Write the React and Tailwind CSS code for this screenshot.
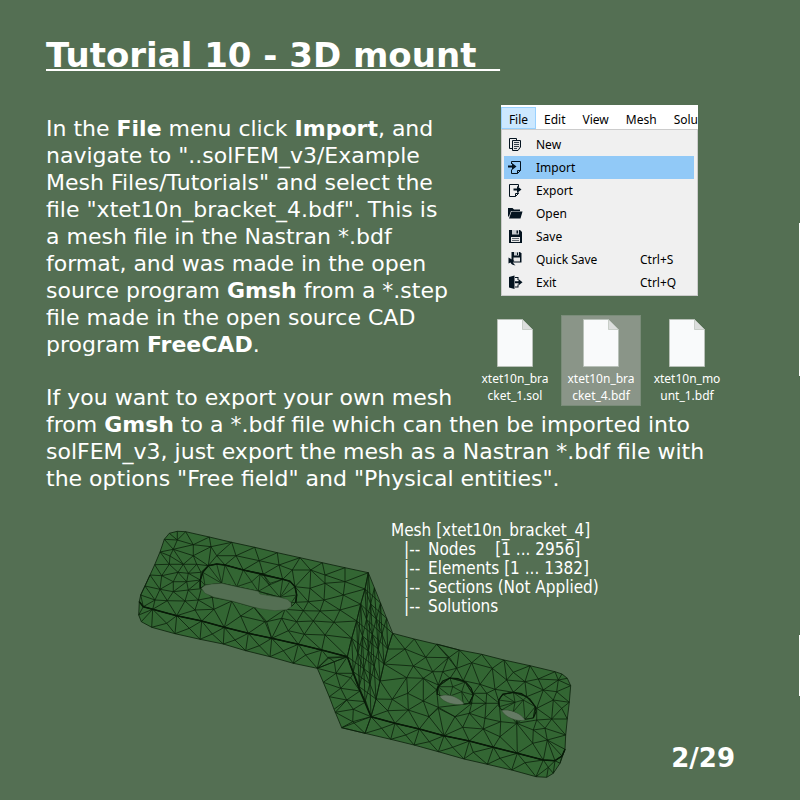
import React from "react";

/* ---------- mesh geometry ---------- */

// Points are measured on a grid three times finer than the drawing,
// relative to the corner of the patch they belong to.
const at = (ox, oy, list) => {
  const out = [];
  for (let i = 0; i < list.length; i += 2) out.push([ox + list[i] / 3, oy + list[i + 1] / 3]);
  return out;
};
const A = (...l) => at(130, 520, l);
const B = (...l) => at(260, 540, l);
const C = (...l) => at(310, 620, l);
const D = (...l) => at(430, 640, l);

const upperFold = [...A(28, 245, 40, 260, 68, 268, 140, 287, 215, 303, 283, 322, 355, 340), ...B(35, 295, 115, 313, 185, 330, 262, 350)];
const lowerFold = [...C(183, 290, 255, 310, 328, 327), ...D(42, 287, 118, 303, 190, 322, 262, 340, 340, 360, 375, 362, 396, 348, 405, 328)];
const rampTop = B(325, 98, 315, 147, 302, 193, 290, 243, 275, 295, 262, 350);
const rampBottom = [...B(398, 280, 383, 327, 372, 372, 360, 423), ...C(198, 237, 183, 290)];

const upperEdge = [
  ...A(28, 245, 32, 225, 60, 165, 74, 134, 90, 96, 103, 58, 118, 40, 142, 34, 167, 35, 238, 51, 305, 67, 374, 82),
  ...B(52, 38, 120, 53, 187, 68, 255, 83, 325, 98),
];
const lowerEdge = [
  ...C(245, 40, 313, 57, 380, 73),
  ...D(20, 12, 88, 30, 155, 43, 222, 60, 300, 77, 375, 95, 396, 102, 412, 115, 422, 137, 418, 187, 412, 237, 407, 285, 405, 328),
];
const upperBase = [...A(26, 285, 34, 305, 65, 322, 135, 341, 210, 358, 280, 372, 347, 392, 420, 410), ...B(100, 370, 172, 385)];
const lowerBase = [...C(95, 323, 165, 340, 242, 358, 312, 375, 385, 395), ...D(102, 357, 172, 373, 245, 390, 318, 410, 350, 412, 370, 400, 390, 370, 405, 328)];

const slotRim = [...A(211, 205, 211, 180, 218, 157, 235, 137, 260, 132, 285, 135, 340, 150, 400, 163), ...B(0, 103, 68, 118, 90, 124, 105, 140, 110, 165, 107, 187)];
const slotVoid = [...A(214, 205, 225, 196, 245, 192, 275, 190, 320, 200, 385, 214), ...B(0, 162, 35, 168, 60, 172, 82, 178, 94, 188, 94, 200, 80, 209, 45, 212, 0, 206), ...A(372, 262, 305, 243, 250, 231, 225, 220)];

const regions = [
  {
    outline: [...upperEdge, ...rampTop.slice(1), ...[...upperFold].reverse().slice(1)],
    inner: [
      ...A(103, 58, 142, 60, 130, 88, 190, 74, 243, 80, 120, 108, 190, 107, 260, 107, 318, 107, 388, 122, 118, 133, 160, 133, 200, 133, 235, 137, 285, 135, 340, 150, 400, 163),
      ...A(95, 167, 144, 157, 175, 160, 213, 157, 45, 198, 90, 208, 130, 185, 170, 185, 211, 180, 75, 240, 112, 242, 130, 215, 165, 243, 175, 210, 214, 206, 205, 240, 195, 270, 252, 268, 247, 232, 305, 243, 372, 262, 332, 288, 405, 305),
      ...B(57, 75, 97, 90, 152, 90, 195, 105, 255, 125, 68, 118, 105, 140, 150, 145, 195, 130, 250, 165, 192, 180, 145, 185, 107, 187, 240, 210, 180, 213, 130, 212, 75, 208, 222, 247, 160, 243, 110, 245, 65, 235, 20, 245, 195, 285, 133, 283, 85, 272),
    ],
  },
  {
    outline: [...upperFold, ...[...upperBase].reverse()],
    inner: [...A(110, 310, 178, 325, 247, 342, 315, 360, 388, 377), ...B(70, 332, 137, 345, 205, 355)],
  },
  {
    outline: [...B(262, 350), ...C(130, 160, 150, 213, 168, 245, 183, 290), ...C(165, 340, 95, 323, 76, 277, 58, 230, 40, 187), ...B(172, 385, 205, 352)],
    inner: C(73, 125, 78, 160, 122, 173, 92, 205, 110, 240, 72, 268, 128, 305, 130, 268),
  },
  {
    outline: [...lowerEdge, ...[...lowerFold].reverse().slice(1), ...[...rampBottom].reverse().slice(1)],
    inner: [
      ...C(285, 87, 347, 112, 415, 113, 290, 173, 310, 138, 368, 155, 340, 175, 385, 195, 293, 220, 340, 243, 247, 238, 233, 272, 295, 270, 357, 290, 385, 262),
      ...D(58, 52, 125, 68, 187, 85, 250, 97, 38, 95, 80, 85, 150, 133, 195, 148, 230, 120, 285, 125, 325, 117, 340, 150, 385, 120, 380, 155, 370, 180, 395, 205, 320, 205, 365, 237, 345, 265, 320, 240, 352, 300, 308, 310, 310, 270, 260, 250, 212, 245, 160, 267, 98, 262, 165, 235, 170, 160, 168, 190, 125, 190, 75, 230, 118, 220, 25, 205, 210, 290, 20, 150, 60, 115, 100, 122, 130, 160, 208, 190, 250, 157, 290, 170),
    ],
  },
  {
    outline: [...lowerFold, ...[...lowerBase].reverse().slice(1)],
    inner: [...C(215, 325, 287, 345, 358, 365), ...D(68, 322, 130, 337, 210, 355, 285, 368, 355, 382)],
  },
];

const slotWall = {
  outline: [...slotRim, ...B(94, 200, 94, 188, 60, 172), ...A(385, 214, 320, 200, 275, 190, 225, 196)],
  inner: [...A(365, 185, 420, 190), ...B(28, 135)],
};
const holeWalls = [
  { outline: D(22, 160, 24, 140, 60, 114, 105, 126, 130, 165, 118, 190, 100, 192, 60, 168, 30, 168), inner: D(68, 140, 95, 155) },
  { outline: D(208, 200, 206, 180, 218, 163, 250, 157, 290, 170, 316, 200, 310, 234, 285, 238, 250, 215, 215, 210), inner: D(255, 187, 280, 180) },
];
const holeRims = [
  D(22, 165, 22, 145, 38, 123, 60, 114, 85, 116, 108, 127, 124, 145, 130, 165, 118, 190),
  D(208, 200, 206, 180, 218, 163, 250, 157, 275, 161, 300, 178, 316, 200, 318, 215, 310, 234),
];
const holeVoids = ["M439.500 696.500C444 694 452 695 457 698C461 700 463 702 464 704C456 706 444 703 439.500 696.500Z", "M501.500 710.500C507 709 514 711 519 714C522 716 524 718 525 720C517 722 506 718 501.500 710.500Z"];

function triangulate(points) {
  const p = [...points, [-4000, -4000], [6000, -4000], [300, 8000]];
  const n = points.length;
  let tris = [[n, n + 1, n + 2]];
  const inCircle = ([a, b, c], q) => {
    const [ax, ay] = p[a], [bx, by] = p[b], [cx, cy] = p[c];
    const d = 2 * (ax * (by - cy) + bx * (cy - ay) + cx * (ay - by));
    if (Math.abs(d) < 1e-9) return true;
    const sa = ax * ax + ay * ay, sb = bx * bx + by * by, sc = cx * cx + cy * cy;
    const ux = (sa * (by - cy) + sb * (cy - ay) + sc * (ay - by)) / d;
    const uy = (sa * (cx - bx) + sb * (ax - cx) + sc * (bx - ax)) / d;
    return (q[0] - ux) ** 2 + (q[1] - uy) ** 2 < (ax - ux) ** 2 + (ay - uy) ** 2;
  };
  for (let i = 0; i < n; i++) {
    const edges = new Map();
    const keep = [];
    for (const t of tris) {
      if (!inCircle(t, p[i])) { keep.push(t); continue; }
      for (const [a, b] of [[t[0], t[1]], [t[1], t[2]], [t[2], t[0]]]) {
        const key = Math.min(a, b) + "-" + Math.max(a, b);
        if (edges.has(key)) edges.set(key, null);
        else edges.set(key, [a, b]);
      }
    }
    for (const e of edges.values()) if (e) keep.push([e[0], e[1], i]);
    tris = keep;
  }
  return tris.filter((t) => t.every((v) => v < n));
}

function inside([x, y], poly) {
  let hit = false;
  for (let i = 0, j = poly.length - 1; i < poly.length; j = i++) {
    const [xi, yi] = poly[i], [xj, yj] = poly[j];
    if (yi > y !== yj > y && x < ((xj - xi) * (y - yi)) / (yj - yi) + xi) hit = !hit;
  }
  return hit;
}

const line = (pts) => "M" + pts.map((q) => q[0].toFixed(1) + " " + q[1].toFixed(1)).join("L");

// Each shared edge is drawn once, so that all lines have the same weight.
function meshPath({ outline, inner }) {
  const seen = new Set();
  const pts = [...outline, ...inner].filter((q) => {
    const key = q[0].toFixed(1) + "," + q[1].toFixed(1);
    if (seen.has(key)) return false;
    seen.add(key);
    return true;
  });
  const drawn = new Set();
  let d = "";
  for (const t of triangulate(pts)) {
    const [a, b, c] = t.map((v) => pts[v]);
    if (!inside([(a[0] + b[0] + c[0]) / 3, (a[1] + b[1] + c[1]) / 3], outline)) continue;
    for (const [i, j] of [[t[0], t[1]], [t[1], t[2]], [t[2], t[0]]]) {
      const key = Math.min(i, j) + "-" + Math.max(i, j);
      if (drawn.has(key)) continue;
      drawn.add(key);
      d += line([pts[i], pts[j]]);
    }
  }
  return d;
}

function rampPath() {
  const cols = 4;
  const grid = rampTop.map((a, i) =>
    Array.from({ length: cols + 1 }, (_, k) => [a[0] + ((rampBottom[i][0] - a[0]) * k) / cols, a[1] + ((rampBottom[i][1] - a[1]) * k) / cols])
  );
  let d = "";
  for (let k = 0; k <= cols; k++) d += line(grid.map((r) => r[k]));
  for (let i = 0; i < grid.length; i++)
    for (let k = 0; k < cols; k++) {
      d += line([grid[i][k], grid[i][k + 1]]);
      if (i > 0) d += line([grid[i - 1][k], grid[i][k + 1]]);
      if (i > 1 && k + 2 <= cols && (i + k) % 2 === 0) d += line([grid[i - 2][k], grid[i][k + 1]]);
      if (i > 0 && k + 2 <= cols) d += line([grid[i][k], grid[i - 1][k + 2]]);
    }
  return d;
}

const silhouette = [
  ...upperEdge, ...lowerEdge, ...[...lowerBase].reverse().slice(1), ...[...upperBase].reverse(),
];

function Bracket() {
  return (
    <svg viewBox="136 520 440 260" className="block w-[440px] h-[260px]" role="img" aria-label="Meshed bracket" strokeLinejoin="round">
      <path d={line(silhouette) + "Z"} fill="#336633" />
      <g fill="none" stroke="#0b210b" strokeWidth="0.8">
        {regions.map((r, i) => <path key={i} d={meshPath(r)} />)}
        <path d={rampPath()} />
      </g>
      <g fill="#336633" stroke="#0b210b" strokeWidth="0.7">
        {[slotWall, ...holeWalls].map((r, i) => (
          <g key={i}>
            <path d={line(r.outline) + "Z"} />
            <path d={meshPath(r)} fill="none" />
          </g>
        ))}
      </g>
      <g stroke="#2c4a2b" strokeWidth="0.5">
        <path d={line(slotVoid) + "Z"} fill="#546f53" />
        {holeVoids.map((d) => <path key={d} d={d} fill="#657a64" />)}
      </g>
      <g fill="none" stroke="#081a08" strokeWidth="1.5">
        <path d={line(upperFold)} />
        <path d={line([...B(262, 350), ...C(130, 160, 150, 213, 183, 290)])} />
        <path d={line(lowerFold)} />
        <path d={line(slotRim)} />
        {holeRims.map((r, i) => <path key={i} d={line(r)} strokeWidth="1.2" />)}
      </g>
    </svg>
  );
}

/* ---------- menu ---------- */

const ink = "#04131f";
const icons = {
  New: (
    <g fill="none" stroke={ink}>
      <path d="M4 11.5H1.5V1.5H8.5V3" />
      <path d="M4.5 3.5H12.5V10L10 13.5H4.5Z" fill="#e4e4e4" />
      <path d="M6 5.5H11M6 7.5H11M6 9.5H11M6 11.5H9" strokeWidth="0.8" />
    </g>
  ),
  Import: (
    <g fill="none" stroke={ink}>
      <path d="M3.5 4V1.5H12.5V10.5L9.5 13.5H3.5V9.5M12.5 10.5H9.5V13.5" />
      <path d="M0 5.5H4V3L8.5 6.5L4 10V7.5H0Z" fill={ink} stroke="none" />
    </g>
  ),
  Export: (
    <g fill="none" stroke={ink}>
      <path d="M10.5 4V1.5H1.5V13.5H7.5L10.5 10.5V9.5M7.5 13.5V10.5H10.5" />
      <path d="M5.5 5.5H9V3L13.5 6.5L9 10V7.5H5.5Z" fill={ink} stroke="none" />
    </g>
  ),
  Open: (
    <g fill={ink}>
      <path d="M0 2H4.5L6 3.5H12V5H3L1 10.5H0Z" />
      <path d="M3.5 5.5H14.5L12.5 12.5H1Z" />
    </g>
  ),
  Save: (
    <g>
      <path d="M1 1H12L14 3V14H1Z" fill={ink} />
      <path d="M4 1H11V5.5H4Z" fill="#c8ccd0" />
      <path d="M8.5 1.5H10V4.5H8.5Z" fill={ink} />
      <path d="M3 8H12V13H3Z" fill="#e8e8e8" />
      <path d="M4 9.5H11M4 11.5H11" stroke={ink} strokeWidth="0.6" />
    </g>
  ),
  "Quick Save": (
    <g>
      <path d="M3.5 0H12L13.5 1.5V10.5H3.5Z" fill={ink} />
      <path d="M6 0H11V3.5H6Z" fill="#c8ccd0" />
      <path d="M9 0.5H10V3H9Z" fill={ink} />
      <path d="M5.5 5.5H12V9.5H5.5Z" fill="#e8e8e8" />
      <path d="M0.5 5.5L6.5 9L4.5 9.5C5 11 6 12 7.5 13.5C4.5 13 3 12 2.5 10.5L0.5 11.5Z" fill={ink} />
    </g>
  ),
  Exit: (
    <g fill={ink}>
      <path d="M1 2L6.5 0.5V14L1 12.5Z" />
      <path d="M7 2H10.5V5H9.5V3H7ZM7 12.5H10.5V9.5H9.5V11.5H7Z" />
      <path d="M7 6.3H10.5V4L14.5 7.3L10.5 10.5V8.3H7Z" />
    </g>
  ),
};

const entries = [
  ["New"], ["Import"], ["Export"], ["Open"], ["Save"], ["Quick Save", "Ctrl+S"], ["Exit", "Ctrl+Q"],
];

function FileMenu() {
  return (
    <div className="w-[197px] overflow-hidden bg-white text-xs text-black font-['Noto_Sans',sans-serif]">
      <div className="flex h-6 items-end whitespace-nowrap">
        <button type="button" className="h-[22px] w-[35px] shrink-0 border border-[#99d1ff] bg-[#cce8ff] pt-1 leading-4">File</button>
        <div className="flex grow justify-between pl-2">
          {["Edit", "View", "Mesh", "Solu"].map((m) => (
            <button key={m} type="button" className="h-[22px] shrink-0 pt-1 leading-4">{m}</button>
          ))}
        </div>
      </div>
      <ul className="border border-[#cccccc] bg-[#f0f0f0] pl-[2px] pr-[3px] pt-[3px] pb-px">
        {entries.map(([name, keys]) => (
          <li key={name}>
            <button type="button" className={"flex h-[23px] w-full items-center pl-1 text-left " + (name === "Import" ? "bg-[#91c9f7]" : "")}>
              <svg viewBox="0 0 15 15" className="mr-[13px] size-[15px] shrink-0" aria-hidden="true">{icons[name]}</svg>
              <span className="w-[104px]">{name}</span>
              {keys && <span>{keys}</span>}
            </button>
          </li>
        ))}
      </ul>
    </div>
  );
}

function FileTile({ lines, selected }) {
  return (
    <li className={"flex h-[91px] w-20 flex-col items-center border pt-[3px] " + (selected ? "border-[#7a8c79] bg-[#8a9588]" : "border-transparent")}>
      <svg viewBox="0 0 36 48" className="h-12 w-9 shrink-0" aria-hidden="true">
        <path d="M0.5 0.5H25.5L35.5 10.5V47.5H0.5Z" fill="#f9fafb" stroke="#b9c1b9" />
        <path d="M25.5 0.5V10.5H35.5Z" fill="#dcdedd" stroke="#b9c1b9" strokeWidth="0.7" />
      </svg>
      <span className="mt-[3px] text-center text-xs leading-[17px]">{lines[0]}<br />{lines[1]}</span>
    </li>
  );
}

const tree = ["Nodes    [1 ... 2956]", "Elements [1 ... 1382]", "Sections (Not Applied)", "Solutions"];

export default function App() {
  return (
    <main className="relative min-h-screen overflow-hidden bg-[#546f53] pl-[46px] pr-[65px] text-white font-['DejaVu_Sans',sans-serif]">
      <h1 className="pt-[34px] text-[34px] font-bold leading-[42px] underline decoration-2 underline-offset-2">Tutorial 10 - 3D mount&nbsp;&nbsp;</h1>

      <section className="mt-[29px] pr-1 text-[22px] leading-[27px]">
        <aside className="float-right w-[276px] pl-5">
          <div className="ml-[26px]"><FileMenu /></div>
          <ul className="mt-[19px] flex gap-[6px] font-['Noto_Sans',sans-serif]">
            <FileTile lines={["xtet10n_bra", "cket_1.sol"]} />
            <FileTile lines={["xtet10n_bra", "cket_4.bdf"]} selected />
            <FileTile lines={["xtet10n_mo", "unt_1.bdf"]} />
          </ul>
        </aside>
        <p className="pt-[10px]">
          In the <b>File</b> menu click <b>Import</b>, and navigate to "..solFEM_v3/Example Mesh Files/Tutorials" and select the file "xtet10n_bracket_4.bdf". This is a mesh file in the Nastran *.bdf format, and was made in the open source program <b>Gmsh</b> from a *.step file made in the open source CAD program <b>FreeCAD</b>.
        </p>
        <p className="mt-[26px]">
          If you want to export your own mesh from <b>Gmsh</b> to a *.bdf file which can then be imported into solFEM_v3, just export the mesh as a Nastran *.bdf file with the options "Free field" and "Physical entities".
        </p>
      </section>

      <section className="mt-7 flex items-end justify-between">
        <div className="ml-[90px] grid">
          <div className="col-start-1 row-start-1"><Bracket /></div>
          <div className="col-start-1 row-start-1 ml-[255px] pt-px whitespace-pre text-[17px] leading-[19px] font-['DejaVu_Sans_Condensed','Noto_Sans',sans-serif]">
            <p>Mesh [xtet10n_bracket_4]</p>
            <ul className="pl-[13px]">
              {tree.map((t) => (
                <li key={t} className="flex"><span className="w-6">|--</span>{t}</li>
              ))}
            </ul>
          </div>
        </div>
        <p className="pb-[6px] text-[26px] font-bold leading-8">2/29</p>
      </section>

      <div className="absolute right-0 top-[223px] h-[153px] w-px bg-white" />
      <div className="absolute right-0 top-[635px] h-[61px] w-px bg-white" />
    </main>
  );
}
